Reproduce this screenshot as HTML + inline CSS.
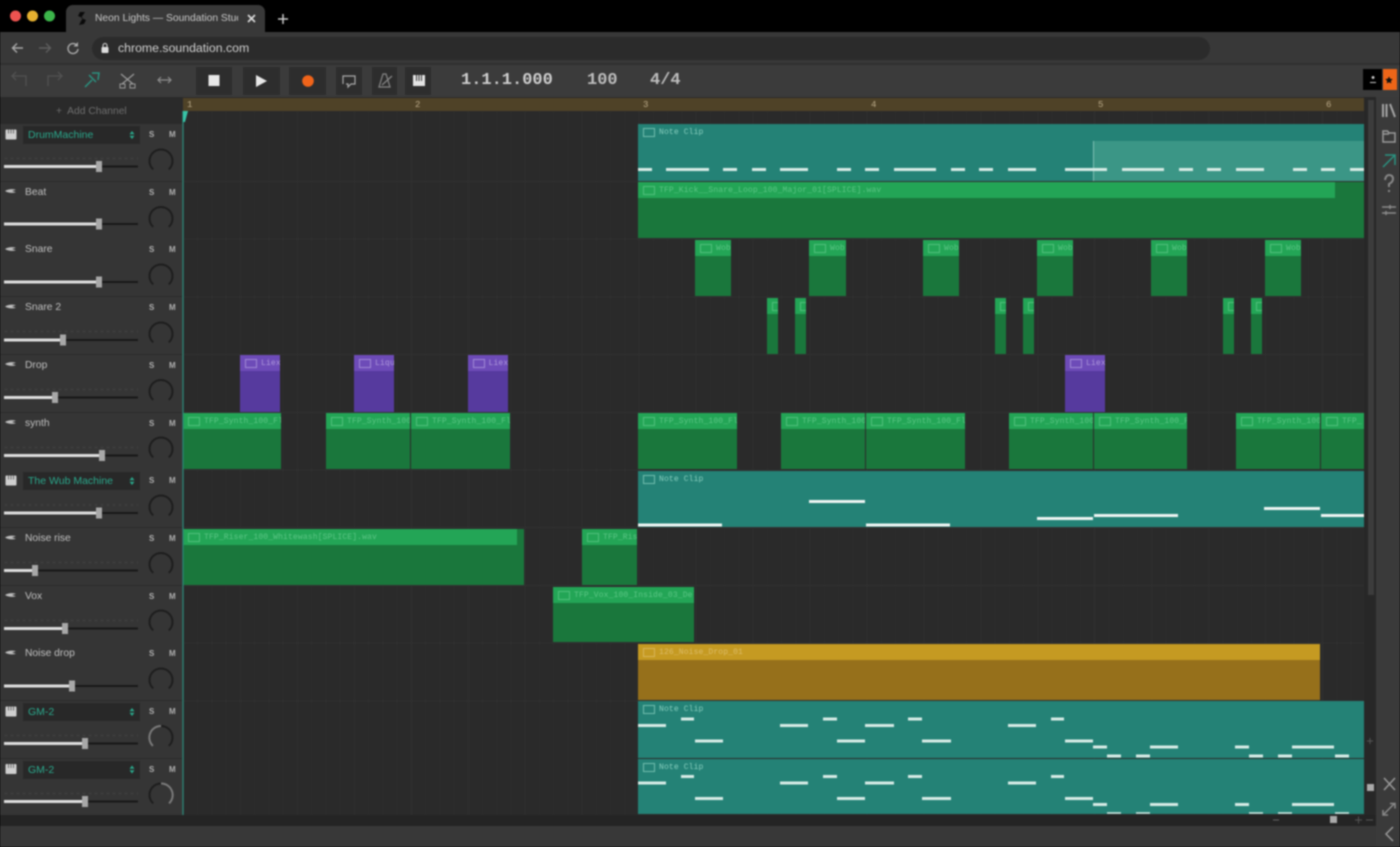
<!DOCTYPE html>
<html><head><meta charset="utf-8"><title>Neon Lights — Soundation Studio</title>
<style>
html,body{margin:0;padding:0;background:#000;width:1400px;height:847px;overflow:hidden}
#w{position:relative;width:1400px;height:847px;overflow:hidden;filter:blur(.8px);font-family:"Liberation Sans",sans-serif;background:#383838}
#w div,#w svg,#w span.a{position:absolute}
.btn{background:#2d2d2d;top:67px;height:28px}
.t{left:0;width:182px;height:57px;background:#353535;border-bottom:1px solid #2b2b2b}
.n{position:absolute;left:25px;top:4px;font-size:10.3px;color:#c0c0c0;line-height:13px}
.s{position:absolute;left:23px;top:2px;width:117px;height:18px;background:#282828;color:#2aa78b;font-size:10.5px;line-height:18px;text-indent:5px}
.sm{position:absolute;top:6px;font-size:8px;color:#b0b0b0;line-height:10px;font-weight:bold}
.c{overflow:hidden}
.c b{position:absolute;left:0;top:0;height:16px;width:100%;overflow:hidden;font:normal 8px/17px "Liberation Mono",monospace;white-space:nowrap;text-indent:21px;letter-spacing:.14px}
.c b::before{content:"";position:absolute;left:5px;top:4px;width:10px;height:7px;border:1px solid currentColor;opacity:.8}
.te{background:#248276;color:#86cdbd}
.te b{background:#248276}
.g{background:#1a773c;color:#5cc685}
.g b{background:#23a556}
.p{background:#563a9e;color:#ae98dc}
.p b{background:#6d4bb8}
.y{background:#96701b;color:#dcbc68}
.y b{background:#c59a22}
</style></head><body><div id="w">

<!-- browser chrome -->
<div style="left:0;top:0;width:1400px;height:32px;background:#000"></div>
<svg style="left:0;top:0" width="300" height="32"><circle cx="15.500" cy="16" r="5.500" fill="#ee5350"/><circle cx="32.500" cy="16" r="5.500" fill="#e5b02f"/><circle cx="49.500" cy="16" r="5.500" fill="#3cb54a"/></svg>
<div style="left:66px;top:5px;width:199px;height:28px;background:#383838;border-radius:7px 7px 0 0"></div>
<svg style="left:76px;top:11px" width="12" height="15"><path d="M9 1 L4 1 L2 5 L7 7 L5 10 L3 14 L8 13 L10 9 L5 7 L7 4Z" fill="#0a0a0a"/></svg>
<div style="left:95px;top:12px;width:143px;height:14px;overflow:hidden;white-space:nowrap;font-size:10.300px;line-height:14px;color:#c8c8c8">Neon Lights — Soundation Studio</div>
<svg style="left:246px;top:13px" width="12" height="12"><path d="M2 2L9 9M9 2L2 9" stroke="#ddd" stroke-width="1.600"/></svg>
<svg style="left:277px;top:13px" width="12" height="12"><path d="M6 1V11M1 6H11" stroke="#ccc" stroke-width="1.500"/></svg>
<svg style="left:10px;top:40px" width="75" height="16"><path d="M13 8H3M7 3.500L2.500 8L7 12.500" fill="none" stroke="#aaa" stroke-width="1.400"/><path d="M29 8H40M36 3.500L40.500 8L36 12.500" fill="none" stroke="#5e5e5e" stroke-width="1.400"/><path d="M67 5.500A5 5 0 1 0 68 9" fill="none" stroke="#aaa" stroke-width="1.400"/><path d="M68 2V6.500H63.500" fill="#aaa"/></svg>
<div style="left:92px;top:37px;width:1118px;height:23px;background:#2b2b2b;border-radius:12px"></div>
<svg style="left:100px;top:42px" width="10" height="12"><rect x="1.500" y="5" width="7" height="6" rx="1" fill="#ddd"/><path d="M3 5V3.500a2 2 0 0 1 4 0V5" fill="none" stroke="#ddd"/></svg>
<div style="left:118px;top:40px;font-size:12.300px;line-height:16px;color:#d0d0d0;white-space:nowrap">chrome.soundation.com</div>
<div style="left:0;top:63px;width:1400px;height:2px;background:#303030"></div>

<!-- toolbar -->
<div style="left:0;top:65px;width:1400px;height:32px;background:#3b3b3b"></div>
<svg style="left:0;top:65px" width="190" height="32">
<path d="M26 21V11H12M16 7L12 11L16 15" fill="none" stroke="#525252" stroke-width="1.300"/>
<path d="M48 21V11H62M58 7L62 11L58 15" fill="none" stroke="#525252" stroke-width="1.300"/>
<path d="M85 22L92 15M89 10L96 17M92 8L99 8L98 15" fill="none" stroke="#2a9280" stroke-width="1.500"/>
<path d="M121 9L133 19M134 9L122 19" stroke="#999" stroke-width="1.300"/><rect x="120" y="19" width="5" height="4" fill="none" stroke="#999"/><rect x="130" y="19" width="5" height="4" fill="none" stroke="#999"/>
<path d="M158 15H171M161 12L158 15L161 18M168 12L171 15L168 18" fill="none" stroke="#8e8e8e" stroke-width="1.200"/>
</svg>
<div class="btn" style="left:196px;width:36px"></div>
<div class="btn" style="left:243px;width:37px"></div>
<div class="btn" style="left:289px;width:37px"></div>
<div class="btn" style="left:336px;width:26px"></div>
<div class="btn" style="left:372px;width:25px"></div>
<div class="btn" style="left:405px;width:26px"></div>
<svg style="left:196px;top:67px" width="240" height="28">
<rect x="12.500" y="8" width="11" height="11" fill="#e8e8e8"/>
<path d="M60 8L71 14L60 20Z" fill="#e8e8e8"/>
<circle cx="112" cy="14" r="5.800" fill="#f0641a"/>
<path d="M147 17V9H159V17H155L152 20V17H150" fill="none" stroke="#aaa" stroke-width="1.200"/>
<path d="M183 20L187 7H190L194 20ZM186 18L196 9" fill="none" stroke="#888" stroke-width="1.200"/>
<rect x="217" y="8" width="12" height="11" fill="#e4e4e4"/><path d="M220.500 8V14M223 8V14M225.500 8V14" stroke="#333" stroke-width="1"/>
</svg>
<div style="left:461px;top:71px;font:bold 17px/20px 'Liberation Mono',monospace;color:#cfcfcf;white-space:nowrap">1.1.1.000</div>
<div style="left:587px;top:71px;font:bold 17px/20px 'Liberation Mono',monospace;color:#bdbdbd">100</div>
<div style="left:650px;top:71px;font:bold 17px/20px 'Liberation Mono',monospace;color:#bdbdbd">4/4</div>
<div style="left:1363px;top:69px;width:19px;height:21px;background:#000"></div>
<div style="left:1383px;top:69px;width:14px;height:21px;background:#ee6518"></div>
<svg style="left:1363px;top:69px" width="36" height="21"><path d="M10 7a1.500 1.500 0 1 0 .1 0ZM7 13h6v1H7Z" fill="#ccc"/><path d="M26 7.500l1.200 2.300 2.500.3-1.800 1.800.4 2.500-2.300-1.200-2.300 1.200.4-2.500-1.800-1.800 2.500-.3Z" fill="#111"/></svg>

<!-- grid -->
<div style="left:183px;top:97px;width:1181px;height:718px;background:#2a2a2a"></div>
<div style="left:183px;top:111px;width:1181px;height:704px;background-image:repeating-linear-gradient(90deg,#303030 0,#303030 1px,transparent 1px,transparent 227.800px),repeating-linear-gradient(90deg,#2e2e2e 0,#2e2e2e 1px,transparent 1px,transparent 56.950px),repeating-linear-gradient(90deg,#2c2c2c 0,#2c2c2c 1px,transparent 1px,transparent 14.240px)"></div>
<div style="left:183px;top:181px;width:1181px;height:577px;background-image:repeating-linear-gradient(180deg,#313131 0,#313131 1px,transparent 1px,transparent 57.700px)"></div>
<!-- ruler -->
<div style="left:183px;top:98px;width:1181px;height:13px;background:#4f4227"></div>
<div style="left:187px;top:99px;font:9px/12px 'Liberation Mono',monospace;color:#baa988">1</div>
<div style="left:415px;top:99px;font:9px/12px 'Liberation Mono',monospace;color:#baa988">2</div>
<div style="left:643px;top:99px;font:9px/12px 'Liberation Mono',monospace;color:#baa988">3</div>
<div style="left:871px;top:99px;font:9px/12px 'Liberation Mono',monospace;color:#baa988">4</div>
<div style="left:1098px;top:99px;font:9px/12px 'Liberation Mono',monospace;color:#baa988">5</div>
<div style="left:1326px;top:99px;font:9px/12px 'Liberation Mono',monospace;color:#baa988">6</div>

<!-- clips -->
<div class="c te" style="left:638px;top:124px;width:726px;height:56.500px"><b>Note Clip</b></div>
<div style="left:1093px;top:141px;width:271px;height:39.500px;background:#3b9686;border-left:1px solid #7fc0b3"></div>
<div class="c g" style="left:638px;top:182px;width:726px;height:56px"><b style="width:697px">TFP_Kick__Snare_Loop_100_Major_01[SPLICE].wav</b></div>

<div class="c g" style="left:695px;top:240px;width:36px;height:56px"><b>Wob</b></div>
<div class="c g" style="left:809px;top:240px;width:37px;height:56px"><b>Wob</b></div>
<div class="c g" style="left:923px;top:240px;width:36px;height:56px"><b>Wob</b></div>
<div class="c g" style="left:1037px;top:240px;width:36px;height:56px"><b>Wob</b></div>
<div class="c g" style="left:1151px;top:240px;width:36px;height:56px"><b>Wob</b></div>
<div class="c g" style="left:1265px;top:240px;width:36px;height:56px"><b>Wob</b></div>

<div class="c g" style="left:767px;top:298px;width:10.500px;height:56px"><b style="text-indent:0"></b></div>
<div class="c g" style="left:795px;top:298px;width:11px;height:56px"><b style="text-indent:0"></b></div>
<div class="c g" style="left:995px;top:298px;width:10.500px;height:56px"><b style="text-indent:0"></b></div>
<div class="c g" style="left:1023px;top:298px;width:10.500px;height:56px"><b style="text-indent:0"></b></div>
<div class="c g" style="left:1223px;top:298px;width:10.500px;height:56px"><b style="text-indent:0"></b></div>
<div class="c g" style="left:1251px;top:298px;width:10.500px;height:56px"><b style="text-indent:0"></b></div>

<div class="c p" style="left:240px;top:355px;width:40px;height:57px"><b>Liex</b></div>
<div class="c p" style="left:354px;top:355px;width:39.500px;height:57px"><b>Liqu</b></div>
<div class="c p" style="left:467.500px;top:355px;width:40px;height:57px"><b>Liex</b></div>
<div class="c p" style="left:1065px;top:355px;width:40px;height:57px"><b>Liex</b></div>

<div class="c g" style="left:183px;top:413px;width:98px;height:56px"><b>TFP_Synth_100_Fl</b></div>
<div class="c g" style="left:326px;top:413px;width:84px;height:56px"><b>TFP_Synth_100</b></div>
<div class="c g" style="left:411px;top:413px;width:98.500px;height:56px"><b>TFP_Synth_100_Fl</b></div>
<div class="c g" style="left:638px;top:413px;width:99px;height:56px"><b>TFP_Synth_100_Fl</b></div>
<div class="c g" style="left:781px;top:413px;width:84px;height:56px"><b>TFP_Synth_100</b></div>
<div class="c g" style="left:866px;top:413px;width:99px;height:56px"><b>TFP_Synth_100_Fl</b></div>
<div class="c g" style="left:1009px;top:413px;width:84px;height:56px"><b>TFP_Synth_100</b></div>
<div class="c g" style="left:1094px;top:413px;width:93px;height:56px"><b>TFP_Synth_100_F</b></div>
<div class="c g" style="left:1236px;top:413px;width:84px;height:56px"><b>TFP_Synth_100</b></div>
<div class="c g" style="left:1321px;top:413px;width:43px;height:56px"><b>TFP_</b></div>

<div class="c te" style="left:638px;top:470.500px;width:726px;height:56px"><b>Note Clip</b></div>

<div class="c g" style="left:183px;top:528.500px;width:341px;height:56.500px"><b style="width:334px">TFP_Riser_100_Whitewash[SPLICE].wav</b></div>
<div class="c g" style="left:582px;top:528.500px;width:55px;height:56.500px"><b>TFP_Ris</b></div>
<div class="c g" style="left:553px;top:586.500px;width:141px;height:55.500px"><b>TFP_Vox_100_Inside_03_Del</b></div>
<div class="c y" style="left:638px;top:644px;width:682px;height:56px"><b>126_Noise_Drop_01</b></div>
<div class="c te" style="left:638px;top:701px;width:726px;height:57px"><b>Note Clip</b></div>
<div class="c te" style="left:638px;top:759px;width:726px;height:54.500px"><b>Note Clip</b></div>

<!-- notes -->
<svg style="left:0;top:0" width="1400" height="847" fill="none" stroke-width="3" stroke="#d8ece6">
<path d="M638 169.500h14M666 169.500h43M723 169.500h14M752 169.500h14M780 169.500h28M837 169.500h14M865 169.500h14M894 169.500h42M951 169.500h14M979 169.500h14M1008 169.500h28M1065 169.500h42M1122 169.500h42M1179 169.500h14M1207 169.500h14M1236 169.500h28M1293 169.500h14M1321 169.500h14M1350 169.500h14"/>
<path stroke="#eef5f3" d="M638 525h84M809 501.500h56M866 525h84M1037 518.500h56M1094 515.500h84M1264 508.500h56M1321 515.500h43"/>
<path d="M681 719h13M638 725.500h28M780 725.500h28M823 719h14M865 725.500h29M908 719h14M695 741h28M837 741h28M922 741h29M1008 725.500h28M1051 719h13M1065 741h28M1093 747h14M1150 747h28M1235 747h14M1292 747h42M1107 756h14M1136 756h14M1249 756h14M1278 756h14M1335 756h14"/>
<path d="M681 776.500h13M638 783h28M780 783h28M823 776.500h14M865 783h29M908 776.500h14M695 798.500h28M837 798.500h28M922 798.500h29M1008 783h28M1051 776.500h13M1065 798.500h28M1093 804.500h14M1150 804.500h28M1235 804.500h14M1292 804.500h42"/>
<path stroke-width="1.500" d="M1107 813h14M1136 813h14M1249 813h14M1278 813h14M1335 813h14"/>
</svg>

<!-- left panel -->
<div style="left:0;top:97px;width:183px;height:27px;background:#2a2a2a"></div>
<div style="left:56px;top:105px;font-size:10.300px;line-height:13px;color:#6e6e6e;white-space:nowrap">+&nbsp; Add Channel</div>

<div class="t" style="top:124px"><div class="s">DrumMachine</div><span class="sm" style="left:149px">S</span><span class="sm" style="left:169px">M</span></div>
<div class="t" style="top:181.700px"><span class="n">Beat</span><span class="sm" style="left:149px">S</span><span class="sm" style="left:169px">M</span></div>
<div class="t" style="top:239.400px"><span class="n">Snare</span><span class="sm" style="left:149px">S</span><span class="sm" style="left:169px">M</span></div>
<div class="t" style="top:297.100px"><span class="n">Snare 2</span><span class="sm" style="left:149px">S</span><span class="sm" style="left:169px">M</span></div>
<div class="t" style="top:354.800px"><span class="n">Drop</span><span class="sm" style="left:149px">S</span><span class="sm" style="left:169px">M</span></div>
<div class="t" style="top:412.500px"><span class="n">synth</span><span class="sm" style="left:149px">S</span><span class="sm" style="left:169px">M</span></div>
<div class="t" style="top:470.200px"><div class="s">The Wub Machine</div><span class="sm" style="left:149px">S</span><span class="sm" style="left:169px">M</span></div>
<div class="t" style="top:527.900px"><span class="n">Noise rise</span><span class="sm" style="left:149px">S</span><span class="sm" style="left:169px">M</span></div>
<div class="t" style="top:585.600px"><span class="n">Vox</span><span class="sm" style="left:149px">S</span><span class="sm" style="left:169px">M</span></div>
<div class="t" style="top:643.300px"><span class="n">Noise drop</span><span class="sm" style="left:149px">S</span><span class="sm" style="left:169px">M</span></div>
<div class="t" style="top:701px"><div class="s">GM-2</div><span class="sm" style="left:149px">S</span><span class="sm" style="left:169px">M</span></div>
<div class="t" style="top:758.700px;height:56px"><div class="s">GM-2</div><span class="sm" style="left:149px">S</span><span class="sm" style="left:169px">M</span></div>

<svg style="left:0;top:0" width="190" height="847">
<defs>
<g id="pi"><rect x="5.500" y="-5" width="11" height="10" rx="1" fill="#cfcfcf"/><path d="M8.500 -5V-1M11 -5V-1M13.500 -5V-1" stroke="#6a6a6a"/></g>
<g id="wv"><path d="M5 0Q10 -3 16 -1.200L12 0L16 1.200Q10 3 5 0Z" fill="#bdbdbd"/></g>
<g id="ar"><path d="M132 -4L129.500 -.8H134.500ZM132 4L129.500 .8H134.500Z" fill="#2aa78b"/></g>
<path id="kn" d="M-7.800 8.400A11.500 11.500 0 1 1 7.800 8.400" fill="none" stroke="#1d1d1d" stroke-width="2"/>
</defs>
<use href="#pi" y="134.500"/><use href="#ar" y="135"/>
<use href="#wv" y="191"/><use href="#wv" y="249"/><use href="#wv" y="306.500"/><use href="#wv" y="364"/><use href="#wv" y="422"/>
<use href="#pi" y="480.500"/><use href="#ar" y="481"/>
<use href="#wv" y="537.500"/><use href="#wv" y="595"/><use href="#wv" y="652.500"/>
<use href="#pi" y="711.500"/><use href="#ar" y="712"/>
<use href="#pi" y="769"/><use href="#ar" y="769.500"/>
<path d="M5 331.500H138M5 389.500H138M5 447.500H138M5 562.500H138M5 620.500H138M5 735.500H138M5 793.500H138M5 158.500H138M5 505H138" stroke="#3f3f3f" stroke-width="2" stroke-dasharray="2 4"/>
<g stroke="#181818" stroke-width="2">
<path d="M4 166.500H138M4 224H138M4 282H138M4 340H138M4 397.500H138M4 455.500H138M4 513H138M4 570.500H138M4 628.500H138M4 686H138M4 743.500H138M4 801.500H138"/>
</g>
<g stroke="#dedede" stroke-width="3">
<path d="M4 166.500H98M4 224H98M4 282H98M4 340H62M4 397.500H55M4 455.500H101M4 513H98M4 570.500H34M4 628.500H64M4 686H72M4 743.500H85M4 801.500H85"/>
</g>
<g fill="#a8a8a8">
<rect x="96" y="161" width="6" height="11"/><rect x="96" y="218.500" width="6" height="11"/><rect x="96" y="276.500" width="6" height="11"/><rect x="60" y="334.500" width="6" height="11"/><rect x="52" y="392" width="6" height="11"/><rect x="99" y="450" width="6" height="11"/><rect x="96" y="507.500" width="6" height="11"/><rect x="32" y="565" width="6" height="11"/><rect x="62" y="623" width="6" height="11"/><rect x="69" y="680.500" width="6" height="11"/><rect x="82" y="738" width="6" height="11"/><rect x="82" y="796" width="6" height="11"/>
</g>
<use href="#kn" x="161" y="161"/><use href="#kn" x="161" y="218.500"/><use href="#kn" x="161" y="276"/><use href="#kn" x="161" y="334"/><use href="#kn" x="161" y="391.500"/><use href="#kn" x="161" y="449"/><use href="#kn" x="161" y="507"/><use href="#kn" x="161" y="564.500"/><use href="#kn" x="161" y="622"/><use href="#kn" x="161" y="680"/>
<use href="#kn" x="161" y="737.500"/><use href="#kn" x="161" y="795"/>
<path d="M153 745.900A11.500 11.500 0 0 1 161 726" fill="none" stroke="#7c7c7c" stroke-width="2"/>
<path d="M161 783.500A11.500 11.500 0 0 1 169 803.400" fill="none" stroke="#7c7c7c" stroke-width="2"/>
<path d="M183 111V815" stroke="#2b8576" stroke-width="1.300"/>
<path d="M183 111H188L185 122H183Z" fill="#37c3a6"/>
</svg>

<!-- scrollbars / bottom / right -->
<div style="left:1364px;top:97px;width:12px;height:718px;background:#272727"></div>
<div style="left:1368px;top:100px;width:6px;height:495px;background:#3c3c3c"></div>
<div style="left:1376px;top:97px;width:24px;height:750px;background:#3a3a3a"></div>
<div style="left:0;top:815px;width:1376px;height:11px;background:#242424"></div>
<div style="left:0;top:826px;width:1376px;height:21px;background:#383838"></div>
<svg style="left:1270px;top:730px" width="130" height="117">
<path d="M100 8V14M97 11H103" stroke="#555"/>
<rect x="97" y="54" width="7" height="7" fill="#aaa"/>
<path d="M3 90H9" stroke="#666"/><rect x="60" y="86" width="7" height="7" fill="#aaa"/>
<path d="M85 90H92M88.500 86.500V93.500M96 90H103" stroke="#555"/>
<path d="M114 48L125 60M125 48L114 60" stroke="#9a9a9a" stroke-width="1.500"/>
<path d="M114 84L124 74M120 73.500H125V78.500M113 80V85H118" fill="none" stroke="#8a8a8a" stroke-width="1.500"/>
<path d="M123 97L116 104L123 111" fill="none" stroke="#9a9a9a" stroke-width="1.500"/>
</svg>
<svg style="left:1378px;top:100px" width="22" height="120" fill="none" stroke-width="1.500">
<path d="M5 4V17M8.500 4V17M12 4L17 17" stroke="#a5a5a5" stroke-width="2"/>
<path d="M5 31V42H17V33H11L9.500 31Z" stroke="#9a9a9a"/><path d="M5 34H11" stroke="#9a9a9a"/>
<path d="M5 67L17 55M7 55H17V65" stroke="#2a9280"/>
<path d="M7 80Q8 75 11 75Q15 75 15 79Q15 82 11 84V87M11 90V92" stroke="#888" stroke-width="2"/>
<path d="M4 107H18M4 113H18M12 105V109M8 111V115" stroke="#8a8a8a" stroke-width="1.600"/>
</svg>

</div></body></html>
